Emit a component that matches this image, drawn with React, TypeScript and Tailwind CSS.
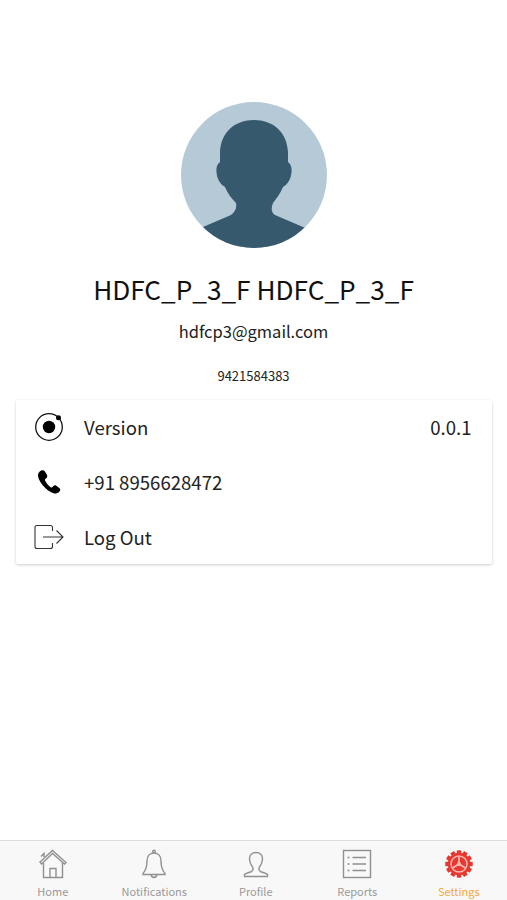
const font = { fontFamily: '"Noto Sans CJK SC", "Noto Sans", sans-serif' };

const Avatar = () => (
  <svg width="146" height="146" viewBox="0 0 146 146" className="block">
    <defs>
      <clipPath id="avatar-clip">
        <circle cx="73" cy="73" r="73" />
      </clipPath>
    </defs>
    <circle cx="73" cy="73" r="73" fill="#b5cad6" />
    <path
      clipPath="url(#avatar-clip)"
      fill="#36596d"
      d="M73 18C54 18 40 30 39 50L39 60C36 62 35 66 35.500 70C36 77 39 82 44 85C47 92 51 97 55 101C56 106 54 110 50 113L22 125L10 130L40 160H106L136 130L122 125L94 113C90 110 90 106 92 101C95 97 99 92 102 85C107 82 110 77 110.500 70C111 66 110 62 107 60L107 50C106 30 92 18 73 18Z"
    />
  </svg>
);

const VersionIcon = () => (
  <svg width="30" height="30" viewBox="0 0 30 30" fill="none">
    <circle cx="15" cy="15" r="13.300" stroke="#111" strokeWidth="1.300" />
    <circle cx="15" cy="15" r="6.200" fill="#000" />
    <circle cx="24.500" cy="5.800" r="2.500" fill="#000" />
  </svg>
);

const PhoneIcon = () => (
  <svg width="30" height="30" viewBox="0 0 30 30">
    <path
      fill="#000"
      d="M7.300 3.600C6 4.200 4.300 5.800 4 7.500C3.700 10 5.300 14 8.500 18C11.700 22 15.800 25 19.500 26.300C21.500 26.900 23.500 26.300 25 25C26.500 23.800 26.700 22.300 25.800 21.500L22.300 18.800C21.300 18.100 20.200 18.300 19.400 19.100L18.200 20.300C17.700 20.700 17.200 20.600 16.600 20.200C14.300 18.500 12.300 16 11 13.500C10.700 12.800 10.800 12.300 11.300 11.900L12.500 10.900C13.300 10.100 13.500 9.100 13 8L10.800 4.300C10 3.200 8.600 3 7.300 3.600Z"
    />
  </svg>
);

const LogoutIcon = () => (
  <svg width="30" height="26" viewBox="0 0 30 26" fill="none" stroke="#333" strokeWidth="1.100">
    <path d="M18.500 7V3.500C18.500 2.300 17.800 1.500 16.500 1.500H3C1.800 1.500 1 2.300 1 3.500V22.500C1 23.700 1.800 24.500 3 24.500H16.500C17.800 24.500 18.500 23.700 18.500 22.500V19" />
    <path d="M9 13H28.500M22.500 6.500L29 13L22.500 19.500" />
  </svg>
);

const HomeIcon = () => (
  <svg width="28" height="30" viewBox="0 0 28 30" fill="none" stroke="#909090" strokeWidth="1.400">
    <path d="M1 13L13.500 1.500L27 13.500L25.500 15L13.500 4.500L2.500 15L1 13Z" />
    <path d="M2 7.500L5 4.500V8" />
    <path d="M4.500 14V28.500H11V19.500H17V28.500H23.500V14" />
    <path d="M11 28.500H17" />
  </svg>
);

const BellIcon = () => (
  <svg width="24" height="30" viewBox="0 0 24 30" fill="none" stroke="#909090" strokeWidth="1.400">
    <circle cx="12" cy="2.500" r="1.300" />
    <path d="M12 4C7.500 4 5 7.500 5 12C5 17 4.500 20.500 1 24.500V25.500H23V24.500C19.500 20.500 19 17 19 12C19 7.500 16.500 4 12 4Z" />
    <path d="M9 25.500C9.500 27.800 10.800 28.500 12 28.500C13.200 28.500 14.500 27.800 15 25.500" />
  </svg>
);

const ProfileIcon = () => (
  <svg width="26" height="30" viewBox="0 0 26 30" fill="none" stroke="#909090" strokeWidth="1.400">
    <path d="M13 3.500C9 3.500 6.500 6 6.500 10C6.500 13.500 8 16 9.500 18C10.500 20 10 21.500 8.500 22.500C6.500 23.500 2.500 24 1.500 25.500V27.500H24.500V25.500C23.500 24 19.500 23.500 17.500 22.500C16 21.500 15.500 20 16.500 18C18 16 19.500 13.500 19.500 10C19.500 6 17 3.500 13 3.500Z" />
  </svg>
);

const ReportsIcon = () => (
  <svg width="30" height="30" viewBox="0 0 30 30" fill="none" stroke="#909090">
    <rect x="1.500" y="1.500" width="27" height="27" strokeWidth="1.400" />
    <path d="M10.500 8.500H24M10.500 15H24M10.500 21.500H24" strokeWidth="1.300" />
    <path d="M5.500 8.500H7.500M5.500 15H7.500M5.500 21.500H7.500" strokeWidth="1.500" />
  </svg>
);

const teeth = Array.from({ length: 12 }, (_, i) => (i * 360) / 12);

const SettingsIcon = () => (
  <svg width="28" height="28" viewBox="0 0 28 28">
    {teeth.map((deg) => (
      <rect key={deg} x="11.800" y="0.300" width="4.400" height="5" fill="#e8372f" transform={`rotate(${deg} 14 14)`} />
    ))}
    <circle cx="14" cy="14" r="11.300" fill="#e8372f" />
    <circle cx="14" cy="14" r="8" fill="none" stroke="#f8b9b2" strokeWidth="1.500" />
    <path d="M14 14V6.500M14 14L7.500 18M14 14L20.500 18" stroke="#f8b9b2" strokeWidth="1.800" fill="none" />
    <circle cx="14" cy="14" r="2" fill="#f8b9b2" />
  </svg>
);

const rows = [
  { icon: <VersionIcon />, label: "Version", value: "0.0.1" },
  { icon: <PhoneIcon />, label: "+91 8956628472" },
  { icon: <LogoutIcon />, label: "Log Out" },
];

const tabs = [
  { icon: <HomeIcon />, label: "Home" },
  { icon: <BellIcon />, label: "Notifications" },
  { icon: <ProfileIcon />, label: "Profile" },
  { icon: <ReportsIcon />, label: "Reports" },
  { icon: <SettingsIcon />, label: "Settings", active: true },
];

export default function App() {
  return (
    <div className="h-[900px] w-[507px] flex flex-col bg-white overflow-hidden" style={font}>
      <main className="flex-1 flex flex-col items-center pt-[102px]">
        <Avatar />
        <h1 className="mt-[23px] h-[36px] text-[26.200px] leading-[36px] font-normal text-[#111]">HDFC_P_3_F HDFC_P_3_F</h1>
        <p className="mt-[12px] h-[24px] text-[16.500px] leading-[24px] text-[#222]">hdfcp3@gmail.com</p>
        <p className="mt-[25px] h-[16px] text-[13px] leading-[16px] text-[#222]">9421584383</p>

        <div className="mt-[16px] h-[164px] w-[476px] bg-white rounded-[2px] shadow-[0_1px_3px_rgba(0,0,0,0.2)]">
          {rows.map((row, i) => (
            <div
              key={row.label}
              className={`${i === 0 ? "h-[54px]" : "h-[55px]"} flex items-center pl-[18.500px] pr-[20px] text-[18.600px] text-[#222]`}
            >
              <span className="w-[30px] flex justify-center">{row.icon}</span>
              <span className="ml-[20px] flex-1">{row.label}</span>
              {row.value && <span>{row.value}</span>}
            </div>
          ))}
        </div>
      </main>

      <nav className="h-[60px] flex pl-[2px] bg-[#f8f8f8] border-t border-[#dcdcdc]">
        {tabs.map((tab) => (
          <div key={tab.label} className="w-[101.500px] shrink-0 flex flex-col items-center">
            <div className="h-[30px] mt-[8px] flex items-center justify-center">{tab.icon}</div>
            <span className={`mt-[4px] text-[11px] leading-[16px] ${tab.active ? "text-[#f5a742]" : "text-[#999]"}`}>
              {tab.label}
            </span>
          </div>
        ))}
      </nav>
    </div>
  );
}
